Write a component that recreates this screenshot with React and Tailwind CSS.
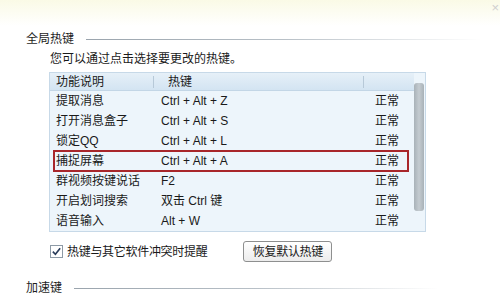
import React from "react";

const rows = [
  { name: "提取消息", key: "Ctrl + Alt + Z" },
  { name: "打开消息盒子", key: "Ctrl + Alt + S" },
  { name: "锁定QQ", key: "Ctrl + Alt + L" },
  { name: "捕捉屏幕", key: "Ctrl + Alt + A", marked: true },
  { name: "群视频按键说话", key: "F2" },
  { name: "开启划词搜索", key: "双击 Ctrl 键" },
  { name: "语音输入", key: "Alt + W" },
];

function SectionTitle({ text, lineClass }) {
  return (
    <div className="flex items-center gap-3 pl-[26px]">
      <span className="text-[12px] text-[#1e1e1e]">{text}</span>
      <div className={`h-px bg-gradient-to-r from-[#9aa4ad] via-[#b8c0c7] to-transparent ${lineClass}`} />
    </div>
  );
}

export default function App() {
  return (
    <div
      className="w-[500px] h-[300px] overflow-hidden bg-white text-[12px] text-[#1a1a1a]"
      style={{ fontFamily: '"Liberation Sans", "Noto Sans CJK SC", sans-serif' }}
    >
      {/* top band */}
      <div className="relative h-[26px] bg-gradient-to-b from-[#fafae6] to-white">
        <span className="absolute right-[1px] top-[1px] text-[13px] leading-[14px] text-[#cfcfcf]">×</span>
      </div>

      <div className="mt-[4px]">
        <SectionTitle text="全局热键" lineClass="w-[395px]" />
      </div>

      <div className="pl-[50px] mt-[3px] leading-[16px]">您可以通过点击选择要更改的热键。</div>

      {/* table */}
      <div className="ml-[49px] mt-[5px] w-[377px] h-[160px] flex border border-[#c7d9e8] bg-[#edf5fb]">
        <div className="flex-1 flex flex-col">
          <div className="h-[18px] flex items-center bg-gradient-to-b from-[#e6f0f8] to-[#d3e4f2] border-b border-[#c3d6e6]">
            <div className="w-[104px] pl-[6px] border-r border-[#b7c9d8] h-[12px] flex items-center">功能说明</div>
            <div className="w-[210px] pl-[14px] border-r border-[#b7c9d8] h-[12px] flex items-center">热键</div>
            <div className="flex-1" />
          </div>
          {rows.map((r) => (
            <div key={r.name} className="relative h-[20px] flex items-center">
              <div className="w-[104px] pl-[6px]">{r.name}</div>
              <div className="w-[210px] pl-[7px]">{r.key}</div>
              <div className="flex-1 pl-[11px]">正常</div>
              {r.marked && (
                <div className="absolute left-[3px] right-[5px] top-[-1px] bottom-[-1px] border-2 border-[#a8262a]" />
              )}
            </div>
          ))}
        </div>
        {/* scrollbar */}
        <div className="w-[11px] flex flex-col pt-[10px] pb-[20px] pr-[1px]">
          <div className="flex-1 rounded-[3px] bg-gradient-to-r from-[#a9b2b8] via-[#c4cbd0] to-[#a9b2b8]" />
        </div>
      </div>

      {/* options */}
      <div className="flex items-center ml-[50px] mt-[9px]">
        <div className="flex items-center gap-[4px]">
          <div className="w-[13px] h-[13px] border border-[#8d9aa6] bg-white flex items-center justify-center">
            <svg viewBox="0 0 12 12" className="w-[11px] h-[11px]">
              <path d="M2 6.2 L4.8 9 L10 2.5" fill="none" stroke="#2a3c5a" strokeWidth="1.8" />
            </svg>
          </div>
          <span className="tracking-[-0.3px]">热键与其它软件冲突时提醒</span>
        </div>
        <button className="ml-[36px] w-[89px] h-[21px] rounded-[3px] border border-[#8e8f8f] bg-gradient-to-b from-white to-[#ececec] text-[12px] tracking-[-0.3px]">
          恢复默认热键
        </button>
      </div>

      <div className="mt-[17px]">
        <SectionTitle text="加速键" lineClass="w-[365px]" />
      </div>
      <div className="pl-[50px] mt-[1px] text-[#d8d8d8]">您可以通过点击选择要更改的加速键。</div>
    </div>
  );
}
